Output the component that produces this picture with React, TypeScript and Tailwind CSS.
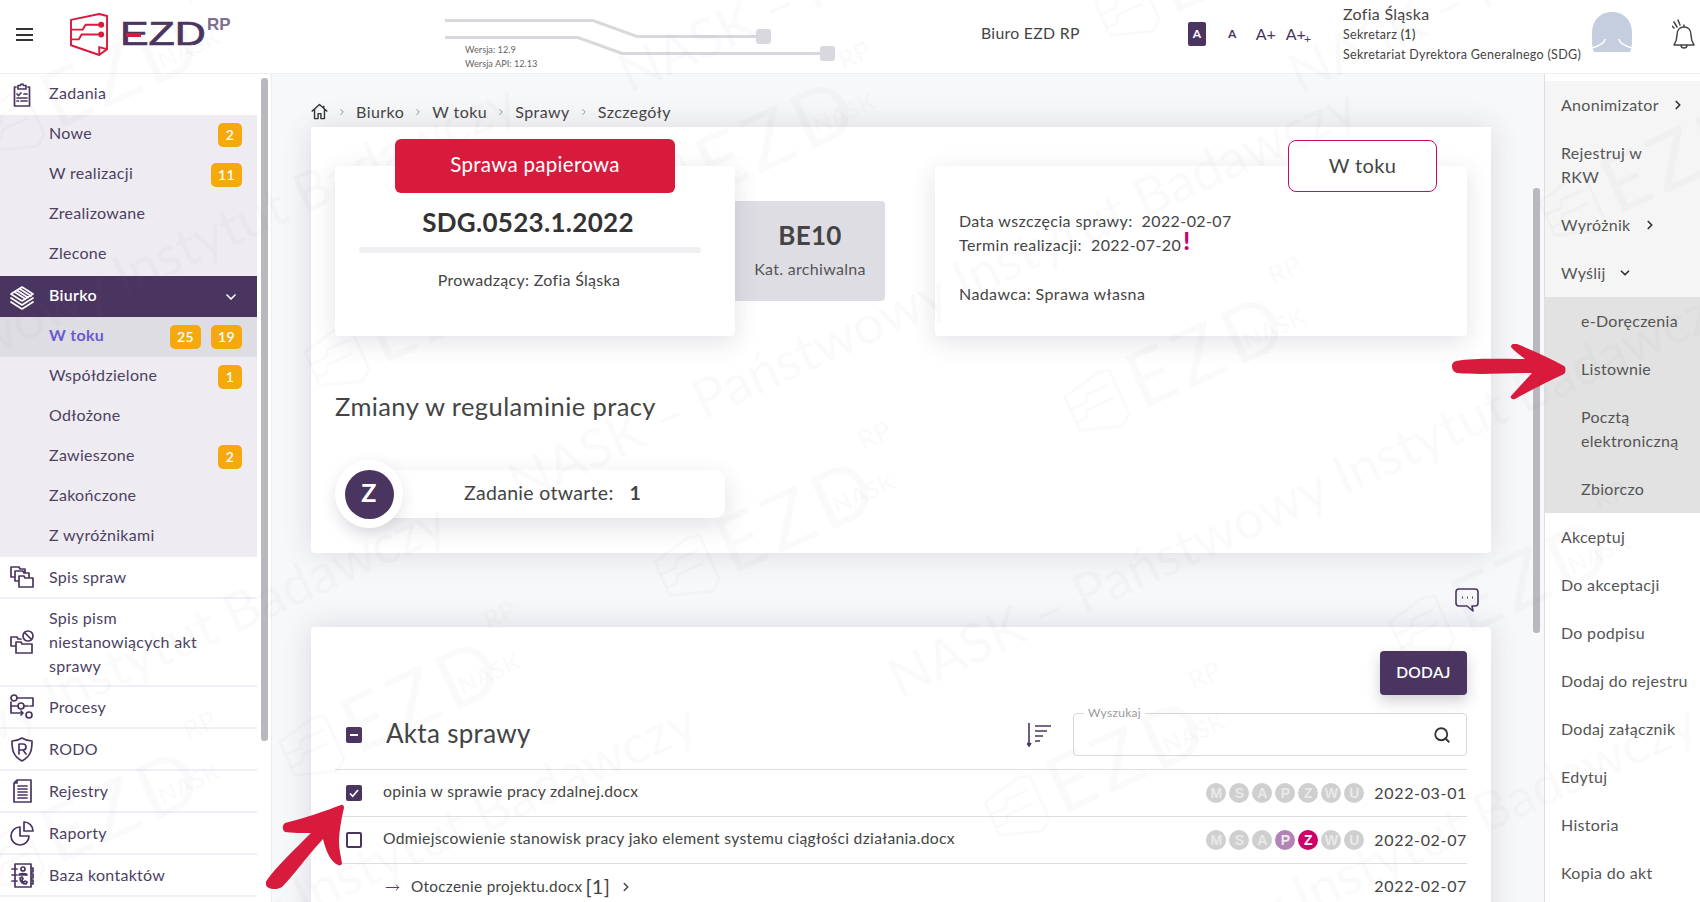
import React from 'react';
import { ChevronDown, ChevronRight, Search, MoveRight } from 'lucide-react';

// Sidebar icons, drawn because the packages have nothing close to them
const Ic: React.FC<{ children: React.ReactNode; white?: boolean }> = ({ children, white }) => (
  <svg
    viewBox="0 0 26 26"
    className={`w-[26px] h-[26px] shrink-0 fill-none stroke-[1.7] ${white ? 'stroke-white' : 'stroke-[#4a3560]'}`}
    strokeLinejoin="round"
    strokeLinecap="round"
  >
    {children}
  </svg>
);

const icons: Record<string, React.ReactNode> = {
  zadania: (
    <Ic>
      <path d="M7 5H5.5v19h15V5H19M9 3.5h2.5a1.5 1.5 0 0 1 3 0H17V7H9z" />
      <path d="M8 12l1.5 1.5L12 11M15 12h3M8 19h1.5M12 19h6M8 16h10" />
    </Ic>
  ),
  biurko: (
    <Ic white>
      <path d="M13 3l11 7-11 7-11-7zM2 14l11 7 11-7M2 18l11 7 11-7M8 6.5l11 7M11 5l11 7M5.5 8l11 7" />
    </Ic>
  ),
  sprawy: (
    <Ic>
      <path d="M2 3h8l1 2h5v4M2 3v10h4M6 7h8l1 2h5v4M6 7v10h4M10 12h5l1 2h8v9H10z" />
    </Ic>
  ),
  pisma: (
    <Ic>
      <path d="M2 8h6l1 2h3M2 8v9h4M7 13h5l1 2h10v9H7zM7 13v4" />
      <circle cx="19" cy="7" r="5" />
      <path d="M15.5 3.5l7 7" />
    </Ic>
  ),
  procesy: (
    <Ic>
      <circle cx="5" cy="4" r="3" />
      <path d="M8 4h16v8h-3M2 8v11h12M11 19l3 0M12 17l2 2-2 2" />
      <circle cx="12" cy="12" r="3" />
      <circle cx="20" cy="21" r="3" />
      <path d="M2 12h7M15 12h4" />
    </Ic>
  ),
  rodo: (
    <Ic>
      <path d="M13 2c3 2 6 3 10 3 0 9-1 15-10 20C4 20 3 14 3 5c4 0 7-1 10-3z" />
      <path d="M10 18V8h4a3 3 0 0 1 0 6h-4M14 14l3 4" />
    </Ic>
  ),
  rejestry: (
    <Ic>
      <path d="M8 2h14v22H5V5zM8 2v3H5" />
      <path d="M9 8h9M9 11h9M9 14h9M9 17h9M9 20h9" />
    </Ic>
  ),
  raporty: (
    <Ic>
      <path d="M11 7a9 9 0 1 0 9 9h-9z" />
      <path d="M15 2a9 9 0 0 1 9 9h-9z" />
    </Ic>
  ),
  kontakty: (
    <Ic>
      <path d="M6 2h16v23H6zM3 7h5M3 13h5M3 19h5M22 6h2v4h-2M22 12h2v4h-2M22 18h2v4h-2" />
      <circle cx="14" cy="7" r="2" />
      <path d="M10 13c0-2 8-2 8 0zM11 16c0 4 3 6 6 6l1-2-2-1-1 1c-1 0-2-1-2-2l1-1-1-2z" />
    </Ic>
  ),
};

const Badge: React.FC<{ n: string }> = ({ n }) => (
  <span
    className={`h-6 mb-px ${n.length > 1 ? 'w-[31px]' : 'w-6'} rounded-[5px] bg-[#f5a90f] text-white text-[14px] font-semibold flex items-center justify-center`}
  >
    {n}
  </span>
);

const SubRow: React.FC<{ label: string; badges?: string[]; active?: boolean }> = ({ label, badges, active }) => (
  <div className={`h-10 flex items-center pl-[49px] pr-[15px] ${active ? 'bg-[#dfdde4]' : ''}`}>
    <span className={`pb-[5px] ${active ? 'font-bold text-[#6a5ad0]' : ''}`}>{label}</span>
    <div className="ml-auto flex gap-[10px]">
      {badges?.map((b) => <Badge key={b} n={b} />)}
    </div>
  </div>
);

const MainRow: React.FC<{ icon: string; children: React.ReactNode }> = ({ icon, children }) => (
  <div className="min-h-[42px] flex items-center gap-[14px] pl-[9px] pr-[20px] border-b-2 border-[#f1eff5]">
    {icons[icon]}
    <span className="leading-6 py-[7px]">{children}</span>
  </div>
);

const Sidebar = () => (
  <aside className="w-[272px] shrink-0 flex border-r border-[#eeebf5] bg-white text-[16px] text-[#4d3f63]">
    <div className="w-[257px] shrink-0">
      <div className="h-[41px] flex items-center gap-[14px] pl-[9px]">
        {icons.zadania}
        <span className="pb-[3px]">Zadania</span>
      </div>
      <div className="bg-[#eeecf1] pb-px">
        <SubRow label="Nowe" badges={['2']} />
        <SubRow label="W realizacji" badges={['11']} />
        <SubRow label="Zrealizowane" />
        <SubRow label="Zlecone" />
      </div>
      <div className="h-[41px] flex items-center gap-[14px] pl-[9px] pr-[18px] bg-[#4a3560] text-white font-semibold">
        {icons.biurko}
        <span className="pb-[3px]">Biurko</span>
        <ChevronDown size={16} strokeWidth={2.5} className="ml-auto" />
      </div>
      <div className="bg-[#eeecf1]">
        <SubRow label="W toku" badges={['25', '19']} active />
        <SubRow label="Współdzielone" badges={['1']} />
        <SubRow label="Odłożone" />
        <SubRow label="Zawieszone" badges={['2']} />
        <SubRow label="Zakończone" />
        <SubRow label="Z wyróżnikami" />
      </div>
      <MainRow icon="sprawy">Spis spraw</MainRow>
      <MainRow icon="pisma">
        Spis pism
        <br />
        niestanowiących akt
        <br />
        sprawy
      </MainRow>
      <MainRow icon="procesy">Procesy</MainRow>
      <MainRow icon="rodo">RODO</MainRow>
      <MainRow icon="rejestry">Rejestry</MainRow>
      <MainRow icon="raporty">Raporty</MainRow>
      <MainRow icon="kontakty">Baza kontaktów</MainRow>
    </div>
    <div className="ml-1 mt-[4px] w-[7px] h-[663px] rounded-[3px] bg-[#b9b8be]" />
  </aside>
);

const Header = () => (
  <header className="h-[74px] shrink-0 flex items-start border-b border-[#eeeef3] bg-white text-[#444]">
    <div className="ml-4 mt-[28px] w-[17px] flex flex-col gap-[3.5px]">
      <span className="h-[2px] bg-[#333]" />
      <span className="h-[2px] bg-[#333]" />
      <span className="h-[2px] bg-[#333]" />
    </div>
    {/* logo */}
    <svg viewBox="0 0 40 44" className="ml-[37px] mt-[13px] w-[39px] h-[43px] shrink-0 fill-none stroke-[#d81b3c] stroke-[2]">
      <path d="M1 7L30 1l8 2v34l-8 6-29-10z" strokeLinejoin="round" />
      <path d="M30 43v-8l8 2M1 17h12l3-5h17M1 27h8l3-5h20" />
      <circle cx="32" cy="12" r="2" fill="#d81b3c" />
      <circle cx="32" cy="22" r="2" fill="#d81b3c" />
    </svg>
    <div className="relative ml-[11px] mt-[15px] w-[113px] flex items-start text-[#4a3560]">
      <span className="origin-left scale-x-[1.3] text-[33px] leading-[38px] tracking-[0px] [-webkit-text-stroke:0.7px_#4a3560] [font-family:'Liberation_Sans',sans-serif]">
        EZD
      </span>
      <span className="absolute left-[6px] top-[18px] w-[15px] h-[4px] bg-[#d81b3c]" />
      <span className="absolute left-[87px] top-[2px] text-[17px] leading-[16px] font-bold tracking-normal [font-family:'Liberation_Sans',sans-serif] text-[#7c6f8f]">
        RP
      </span>
    </div>
    {/* wersje */}
    <div className="ml-[212px] w-[536px] h-[73px] shrink-0 relative">
      <svg viewBox="0 0 400 62" className="absolute left-0 top-0 w-[400px] h-[62px] fill-none stroke-[#d9d8de] stroke-[3]">
        <path d="M0 20.5h148l44 16h120M0 37.5h133l44 16h198" />
        <rect x="311" y="29" width="15" height="15" rx="3" fill="#d9d8de" stroke="none" />
        <rect x="375" y="46" width="15" height="15" rx="3" fill="#d9d8de" stroke="none" />
      </svg>
      <div className="absolute left-[20px] top-[43px] text-[9.2px] leading-[14px] text-[#666] tracking-normal">
        <div>Wersja: 12.9</div>
        <div>Wersja API: 12.13</div>
      </div>
    </div>
    <div className="mt-[21px] w-[207px] shrink-0 text-[15.8px] leading-6">Biuro EZD RP</div>
    <div className="mt-[22px] w-[156px] shrink-0 flex items-center h-6 text-[#4a3560] font-bold">
      <span className="w-[18px] h-6 rounded-[2px] bg-[#4a3560] text-white text-[12px] flex items-center justify-center">A</span>
      <span className="ml-[22px] text-[12px]">A</span>
      <span className="ml-[19px] text-[16px] font-normal tracking-normal">A+</span>
      <span className="ml-[10px] text-[16px] font-normal tracking-normal">A+<sub className="text-[12px] -ml-[2px]">+</sub></span>
    </div>
    <div className="mt-[3px] w-[245px] shrink-0 -ml-[1px]">
      <div className="text-[16px] leading-[22px]">Zofia Śląska</div>
      <div className="text-[12.5px] leading-[20px]">
        Sekretarz <span className="font-semibold">(1)</span>
      </div>
      <div className="text-[12.5px] leading-[20px] whitespace-nowrap">Sekretariat Dyrektora Generalnego (SDG)</div>
    </div>
    <svg viewBox="0 0 44 40" className="ml-[2px] mt-[12px] w-[44px] h-[40px] shrink-0 fill-none">
      <path d="M22 0c12 0 20 9 20 21 0 7 0 13-1 19H3C2 34 2 28 2 21 2 9 10 0 22 0z" fill="#c5cede" />
      <path d="M15 27c0 4-6 7-13 9M29 27c0 4 6 7 13 9" stroke="#fff" strokeWidth="1.4" />
      <path d="M0 38c3-1 3-1 4 2H0zM44 38c-3-1-3-1-4 2h4z" fill="#fff" />
    </svg>
    <svg viewBox="0 0 24 32" className="ml-[38px] mt-[19px] w-[24px] h-[32px] shrink-0 fill-none stroke-[#444] stroke-[1.5]" strokeLinecap="round" strokeLinejoin="round">
      <path d="M12 8c-4 0-7 3-7 8 0 5-1 7-3 10h20c-2-3-3-5-3-10 0-5-3-8-7-8zM9 26a3 3 0 0 0 6 0M12 8V6" />
      <path d="M5 8L2 3M8 6L6 1M2 9L0 7" />
    </svg>
  </header>
);

const Crumbs = () => (
  <div className="h-[53px] flex items-end pb-[3px] pl-[39px] text-[16px] text-[#444] leading-6 tracking-[0.45px]">
    <svg viewBox="0 0 24 24" className="w-[17px] h-[17px] mb-[4px] fill-none stroke-[#333] stroke-[2]" strokeLinejoin="round">
      <path d="M1 12L12 2l11 10M5 9v13h5v-7h4v7h5V9M18 4v3" />
    </svg>
    {['Biurko', 'W toku', 'Sprawy', 'Szczegóły'].map((c) => (
      <React.Fragment key={c}>
        <ChevronRight size={10} strokeWidth={1.5} className="mx-[9px] mb-[7px] text-[#555]" />
        <span>{c}</span>
      </React.Fragment>
    ))}
  </div>
);

const CaseCard = () => (
  <section className="h-[426px] mx-[39px] w-[1180px] rounded-b-[4px] bg-white pt-[39px] px-[24px] shadow-[0_0_30px_rgba(70,60,90,0.16)]">
    <div className="flex items-start text-[#444]">
      <div className="relative z-10 w-[400px] h-[170px] rounded-[4px] bg-white pt-[38px] shadow-[0_6px_24px_rgba(70,60,90,0.15)]">
        <div className="absolute left-[60px] -top-[27px] w-[280px] h-[54px] pb-[3px] rounded-[6px] bg-[#d81b3c] text-white text-[20.5px] flex items-center justify-center">
          Sprawa papierowa
        </div>
        <div className="pr-[14px] text-center text-[26px] leading-9 font-bold text-[#333]">SDG.0523.1.2022</div>
        <div className="ml-[24px] mr-[34px] mt-[7px] h-[6px] rounded-[3px] bg-[#f0f0f3]" />
        <div className="pr-[12px] mt-[15px] text-center text-[16px] leading-6">Prowadzący: Zofia Śląska</div>
      </div>
      <div className="mt-[35px] w-[150px] h-[100px] rounded-r-[4px] bg-[#dfdde4] text-center pt-[16px]">
        <div className="text-[26px] leading-9 font-bold">BE10</div>
        <div className="mt-[4px] text-[16px] leading-6 text-[#555]">Kat. archiwalna</div>
      </div>
      <div className="relative ml-auto w-[532px] h-[170px] rounded-[4px] bg-white pt-[43px] pl-[24px] text-[16px] leading-6 tracking-[0.4px] shadow-[0_6px_24px_rgba(70,60,90,0.15)]">
        <div className="absolute left-[353px] -top-[26px] w-[149px] h-[52px] pb-[3px] rounded-[8px] border border-[#cc0a6a] bg-white text-[20px] text-[#444] flex items-center justify-center">
          W toku
        </div>
        <div>Data wszczęcia sprawy:&nbsp;&nbsp;2022-02-07</div>
        <div className="flex items-start">
          Termin realizacji:&nbsp;&nbsp;2022-07-20
          <span className="ml-[2px] -mt-[4px] text-[24px] leading-[24px] font-black text-[#c9006b]">!</span>
        </div>
        <div className="mt-[25px]">Nadawca: Sprawa własna</div>
      </div>
    </div>
    <h1 className="mt-[54px] text-[25.5px] leading-8 text-[#444] tracking-[0.4px]">Zmiany w regulaminie pracy</h1>
    <div className="relative mt-[38px] w-[390px] h-[68px]">
      <div className="absolute left-[20px] top-[10px] w-[370px] h-[48px] pb-[2px] rounded-[10px] bg-white pl-[109px] flex items-center text-[19.5px] text-[#444] shadow-[0_8px_24px_rgba(70,60,90,0.16)]">
        Zadanie otwarte:&nbsp;&nbsp;&nbsp;<b className="font-bold">1</b>
      </div>
      <div className="absolute left-0 top-0 w-[68px] h-[68px] rounded-full bg-white flex items-center justify-center shadow-[0_6px_16px_rgba(70,60,90,0.14)]">
        <span className="w-[49px] h-[49px] pb-[2px] rounded-full bg-[#4a3560] text-white text-[25px] font-bold flex items-center justify-center">Z</span>
      </div>
    </div>
  </section>
);

const Dots: React.FC<{ on?: Record<string, string> }> = ({ on = {} }) => (
  <div className="flex gap-[3px]">
    {['M', 'S', 'A', 'P', 'Z', 'W', 'U'].map((l) => (
      <span
        key={l}
        className={`w-5 h-5 rounded-full ${on[l] ?? 'bg-[#cfcfcf] text-[#e9e9e9]'} text-[14px] font-bold tracking-normal flex items-center justify-center [font-family:'Liberation_Sans',sans-serif]`}
      >
        {l}
      </span>
    ))}
  </div>
);

const Checkbox: React.FC<{ on?: boolean }> = ({ on }) =>
  on ? (
    <span className="w-[16px] h-[16px] rounded-[2px] bg-[#4a3560] flex items-center justify-center shrink-0">
      <svg viewBox="0 0 12 12" className="w-3 h-3 fill-none stroke-white stroke-[1.6]">
        <path d="M2 6.5l2.7 2.7L10 3" />
      </svg>
    </span>
  ) : (
    <span className="w-[16px] h-[16px] rounded-[2px] border-2 border-[#4a3560] shrink-0" />
  );

const FileRow: React.FC<{ on?: boolean; name: string; dots?: React.ReactNode; date: string }> = ({ on, name, dots, date }) => (
  <div className="h-[47px] flex items-center border-t border-[#dedede] pl-[11px] text-[15.7px] text-[#444]">
    <Checkbox on={on} />
    <span className="ml-[21px] pb-[2px]">{name}</span>
    <div className="ml-auto mr-[10px]">{dots}</div>
    <span className="text-[16px] tracking-[0.65px]">{date}</span>
  </div>
);

const FilesCard = () => (
  <section className="mx-[39px] w-[1180px] h-[400px] rounded-t-[4px] bg-white px-[24px] pt-[24px] shadow-[0_0_30px_rgba(70,60,90,0.16)]">
    <div className="flex justify-end">
      <button className="w-[87px] h-[44px] rounded-[4px] bg-[#4a3560] text-white text-[15.5px] font-semibold shadow-[0_6px_14px_rgba(70,60,90,0.25)]">
        DODAJ
      </button>
    </div>
    <div className="mt-[18px] h-[43px] flex items-center pl-[11px]">
      <span className="w-[16px] h-[16px] rounded-[2px] bg-[#4a3560] flex items-center justify-center shrink-0">
        <span className="w-2 h-[2px] bg-white" />
      </span>
      <h2 className="ml-[24px] pb-[4px] text-[26px] leading-8 text-[#444]">Akta sprawy</h2>
      <svg viewBox="0 0 24 24" className="ml-auto mr-[22px] w-[24px] h-[24px] fill-none stroke-[#4a3560] stroke-[1.6]">
        <path d="M2 0v22M0 20l2 3 2-3M8 3h16M8 8h12M8 13h8M8 18h5" />
      </svg>
      <div className="relative w-[394px] h-[43px] rounded-[4px] border border-[#d9d9d9]">
        <span className="absolute left-[10px] -top-[8px] px-[4px] bg-white text-[12px] leading-[14px] text-[#999]">Wyszukaj</span>
        <Search size={18} strokeWidth={2.4} className="absolute right-[15px] top-[12px] text-[#333]" />
      </div>
    </div>
    <div className="mt-[13px]">
      <FileRow on name="opinia w sprawie pracy zdalnej.docx" dots={<Dots />} date="2022-03-01" />
      <FileRow
        name="Odmiejscowienie stanowisk pracy jako element systemu ciągłości działania.docx"
        dots={<Dots on={{ P: 'bg-[#b085b5] text-[#f0e8f2]', Z: 'bg-[#cc0066] text-white' }} />}
        date="2022-02-07"
      />
      <div className="h-[47px] flex items-center border-t border-[#dedede] pl-[50px] text-[15.3px] text-[#444]">
        <MoveRight size={15} strokeWidth={1.5} className="text-[#4a3560]" />
        <span className="ml-[11px] pb-[2px]">Otoczenie projektu.docx</span>
        <span className="ml-[3px] pb-[2px] text-[20px]">[1]</span>
        <ChevronRight size={14} strokeWidth={2.5} className="ml-[9px]" />
        <span className="ml-auto pb-[2px] text-[16px] tracking-[0.65px]">2022-02-07</span>
      </div>
    </div>
  </section>
);

const ActionItem: React.FC<{ label: React.ReactNode; sub?: boolean; chevron?: 'right' | 'down' }> = ({ label, sub, chevron }) => (
  <div className={`py-3 leading-6 flex items-center ${sub ? 'pl-[36px]' : 'pl-[16px]'}`}>
    <span>{label}</span>
    {chevron === 'right' && <ChevronRight size={14} strokeWidth={3} className="ml-[12px] text-[#333]" />}
    {chevron === 'down' && <ChevronDown size={14} strokeWidth={3} className="ml-[12px] text-[#333]" />}
  </div>
);

const ActionPanel = () => (
  <aside className="flex-1 border-l border-[#dddde2] bg-white pt-[7px] text-[16px] text-[#555]">
    <div className="bg-[#f5f5f5]">
      <ActionItem label="Anonimizator" chevron="right" />
      <ActionItem label={<>Rejestruj w<br />RKW</>} />
      <ActionItem label="Wyróżnik" chevron="right" />
      <ActionItem label="Wyślij" chevron="down" />
    </div>
    <div className="bg-[#e2e2e2]">
      <ActionItem sub label="e-Doręczenia" />
      <ActionItem sub label="Listownie" />
      <ActionItem sub label={<>Pocztą<br />elektroniczną</>} />
      <ActionItem sub label="Zbiorczo" />
    </div>
    <ActionItem label="Akceptuj" />
    <ActionItem label="Do akceptacji" />
    <ActionItem label="Do podpisu" />
    <ActionItem label="Dodaj do rejestru" />
    <ActionItem label="Dodaj załącznik" />
    <ActionItem label="Edytuj" />
    <ActionItem label="Historia" />
    <ActionItem label="Kopia do akt" />
  </aside>
);

// Watermark over the whole page
const lines = [
  [610, 105], [1280, 105], [500, 515], [880, 710], [-340, 510], [-410, 930], [-160, 1130], [840, 1130],
];
const marks = [
  [0, 165], [325, 400], [655, 230], [1085, 445], [1115, 50], [675, 610], [300, 790], [1005, 850], [1410, 670], [0, 900], [1560, 250],
];

const Watermark = () => (
  <div className="absolute inset-0 overflow-hidden pointer-events-none text-[rgba(120,120,130,0.04)]">
    {lines.map(([x, y]) => (
      <div
        key={`${x}-${y}`}
        className="absolute origin-top-left -rotate-[24.5deg] whitespace-nowrap text-[54px] leading-none tracking-normal -translate-y-full"
        style={{ left: x, top: y }}
      >
        NASK – Państwowy Instytut Badawczy
      </div>
    ))}
    {marks.map(([x, y]) => (
      <div key={`${x}-${y}`} className="absolute -rotate-[24.5deg] origin-bottom-left flex items-end w-[270px] h-[100px]" style={{ left: x, top: y - 100 }}>
        <svg viewBox="0 0 40 44" className="w-[56px] h-[62px] shrink-0 fill-none stroke-current stroke-[2]">
          <path d="M1 7L30 1l8 2v34l-8 6-29-10z" />
          <path d="M1 17h12l3-5h17M1 27h8l3-5h20" />
        </svg>
        <span className="ml-[10px] text-[78px] leading-[76px] tracking-[6px]">EZD</span>
        <div className="mb-[16px] ml-[2px] flex flex-col font-bold">
          <span className="text-[26px] leading-[30px]">RP</span>
          <span className="-ml-[50px] mt-[22px] text-[24px] leading-[24px]">NASK</span>
        </div>
      </div>
    ))}
  </div>
);

const Arrows = () => (
  <>
    <svg viewBox="0 0 115 56" className="absolute left-[1451px] top-[344px] w-[115px] h-[56px] fill-[#d81b3c] pointer-events-none">
      <path d="M5 17c18-3 40-2 69-2-5-4-11-8-14-12 0-3 3-4 6-3 17 7 33 14 47 22 2 1 2 6 0 8-15 7-35 17-49 25-3 1-5-1-4-3l21-23c-27 0-53 2-75 0-6-1-7-11-1-12z" />
    </svg>
    <svg viewBox="0 0 78 86" className="absolute left-[266px] top-[804px] w-[78px] h-[86px] fill-[#d81b3c] pointer-events-none">
      <path d="M1 76c10-14 28-31 44-47-8 0-20 0-26-1-3-2-3-7 0-9 20-5 40-12 56-18 2-1 3 1 3 3-3 12-5 26-5 34 0 7 2 15 3 21 0 2-2 3-4 2-8-4-12-14-15-26C43 50 27 72 17 82c-6 6-22 3-16-6z" />
    </svg>
  </>
);

export default function App() {
  return (
    <div className="relative w-[1700px] h-[902px] overflow-hidden flex flex-col bg-white tracking-[0.3px] [font-family:Lato,sans-serif]">
      <Header />
      <div className="flex-1 min-h-0 flex">
        <Sidebar />
        <main className="w-[1261px] shrink-0 overflow-hidden bg-[#f7f8fa]">
          <Crumbs />
          <CaseCard />
          <div className="h-[74px] w-[1207px] flex justify-end pt-[35px]">
            <svg viewBox="0 0 24 24" className="w-6 h-6 fill-none stroke-[#4a3560] stroke-[1.6]" strokeLinejoin="round">
              <path d="M4 1h16a3 3 0 0 1 3 3v11a3 3 0 0 1-3 3h-3l1 5-6-5H4a3 3 0 0 1-3-3V4a3 3 0 0 1 3-3z" />
              <path d="M7 9.5h1M12 9.5h1M17 9.5h1" strokeWidth="2" />
            </svg>
          </div>
          <FilesCard />
        </main>
        <div className="w-[11px] shrink-0 bg-[#f7f8fa]">
          <div className="mt-[114px] w-[7px] h-[445px] rounded-[3px] bg-[#b9b8be]" />
        </div>
        <ActionPanel />
      </div>
      <Watermark />
      <Arrows />
    </div>
  );
}
